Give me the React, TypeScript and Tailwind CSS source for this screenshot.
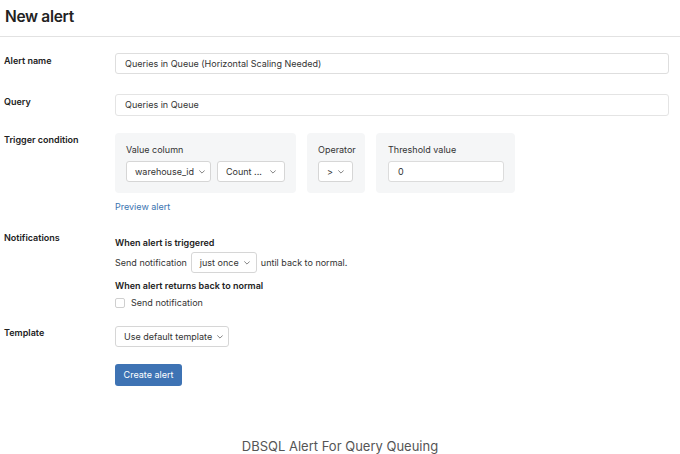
const font = { fontFamily: 'Inter, "Noto Sans", sans-serif' };

function Chevron() {
  return (
    <svg width="6" height="4" viewBox="0 0 6 4" className="shrink-0" fill="none">
      <path d="M0.6 0.7 L3 3.1 L5.4 0.7" stroke="#777" strokeWidth="0.9" strokeLinecap="round" strokeLinejoin="round" />
    </svg>
  );
}

function Select({ label, className = '' }: { label: string; className?: string }) {
  return (
    <div
      className={`flex h-[21px] shrink-0 items-center justify-between gap-[5px] whitespace-nowrap rounded-[3px] border border-[#d6d6d6] bg-white px-[8px] text-[9px] text-[#333] ${className}`}
    >
      <span>{label}</span>
      <Chevron />
    </div>
  );
}

function Label({ children }: { children: React.ReactNode }) {
  return <div className="w-[115px] shrink-0 pl-[4px] text-[9px] font-semibold leading-[14px] text-[#222]">{children}</div>;
}

export default function App() {
  return (
    <div className="h-[454px] w-[680px] overflow-hidden bg-white text-[#333]" style={font}>
      <div className="border-b border-[#e2e2e2] pb-[9px] pl-[5px] pt-[7px] text-[15.5px] font-semibold leading-[20px] tracking-[-0.02em] text-[#222]">
        New alert
      </div>

      <div className="mt-[16px] flex">
        <div className="pt-[1px]">
          <Label>Alert name</Label>
        </div>
        <div className="flex h-[21px] w-[554px] items-center rounded-[3px] border border-[#dedede] px-[9px] text-[9px]">
          Queries in Queue (Horizontal Scaling Needed)
        </div>
      </div>

      <div className="mt-[20px] flex">
        <div className="pt-[1px]">
          <Label>Query</Label>
        </div>
        <div className="flex h-[22px] w-[554px] items-center rounded-[3px] border border-[#e4e4e4] px-[9px] text-[9px]">
          Queries in Queue
        </div>
      </div>

      <div className="mt-[17px] flex">
        <Label>Trigger condition</Label>
        <div>
          <div className="flex gap-[11px]">
            <div className="h-[60px] w-[181px] rounded-[4px] bg-[#f5f6f7] px-[11px] pt-[11px]">
              <div className="text-[9px] leading-[12px]">Value column</div>
              <div className="mt-[5px] flex gap-[6px]">
                <Select label="warehouse_id" className="w-[85px]" />
                <Select label="Count ..." className="w-[68px]" />
              </div>
            </div>
            <div className="h-[60px] w-[58px] rounded-[4px] bg-[#f5f6f7] px-[11px] pt-[11px]">
              <div className="text-[9px] leading-[12px]">Operator</div>
              <div className="mt-[5px] flex">
                <Select label=">" className="w-[35px] justify-center px-[6px]" />
              </div>
            </div>
            <div className="h-[60px] w-[139px] rounded-[4px] bg-[#f5f6f7] px-[12px] pt-[11px]">
              <div className="text-[9px] leading-[12px]">Threshold value</div>
              <div className="mt-[5px] flex h-[21px] w-[116px] items-center rounded-[3px] border border-[#dcdcdc] bg-white px-[9px] text-[9px]">
                0
              </div>
            </div>
          </div>
          <div className="mt-[8px] text-[9px] leading-[12px] text-[#3a74b0]">Preview alert</div>
        </div>
      </div>

      <div className="mt-[18px] flex">
        <Label>Notifications</Label>
        <div className="pt-[5px] text-[9px] leading-[14px]">
          <div className="font-semibold text-[#222]">When alert is triggered</div>
          <div className="mt-[2px] flex items-center gap-[4px]">
            <span>Send notification</span>
            <Select label="just once" className="w-[66px]" />
            <span>until back to normal.</span>
          </div>
          <div className="mt-[6px] font-semibold text-[#222]">When alert returns back to normal</div>
          <div className="mt-[3px] flex items-center gap-[6px]">
            <div className="h-[10px] w-[10px] rounded-[2px] border border-[#cfcfcf] bg-white" />
            <span>Send notification</span>
          </div>
        </div>
      </div>

      <div className="mt-[16px] flex">
        <Label>Template</Label>
        <Select label="Use default template" className="w-[114px]" />
      </div>

      <div className="mt-[17px] flex pl-[115px]">
        <div className="flex h-[22px] w-[67px] items-center justify-center rounded-[3px] bg-[#3e73b4] text-[9px] text-white">
          Create alert
        </div>
      </div>

      <div className="mt-[51px] text-center text-[13px] leading-[18px] text-[#555]">DBSQL Alert For Query Queuing</div>
    </div>
  );
}
